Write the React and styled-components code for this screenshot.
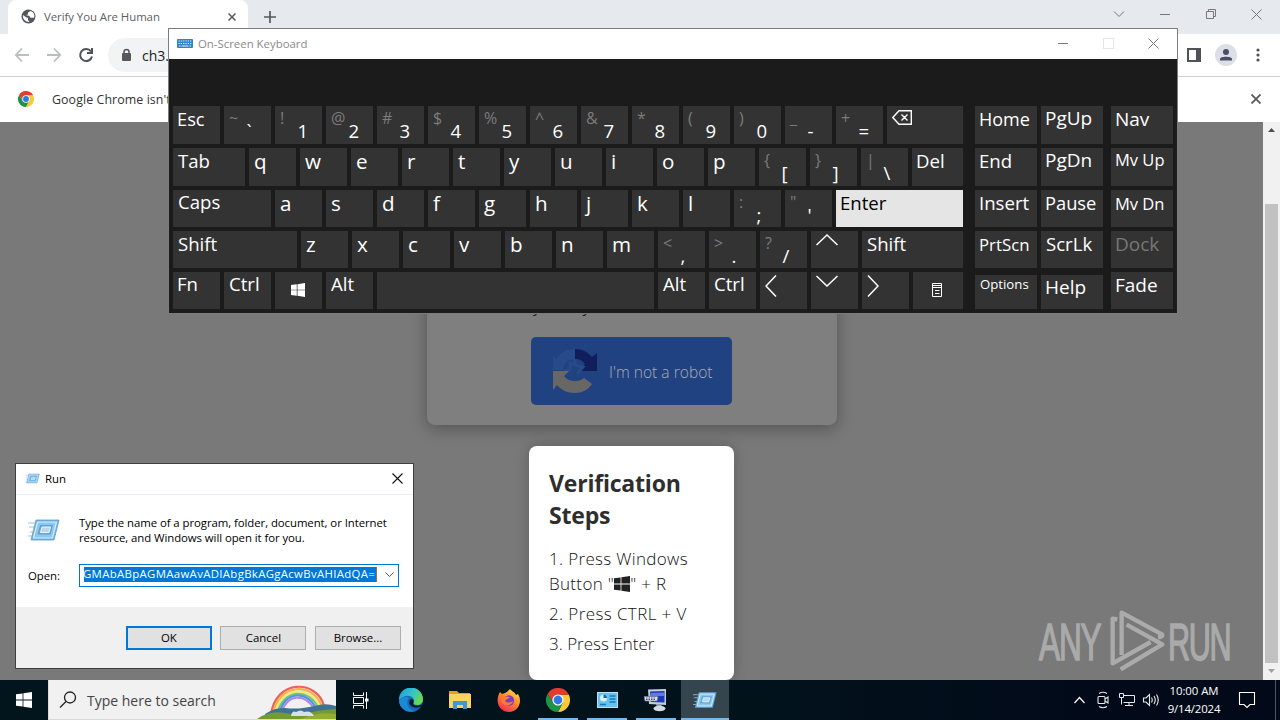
import React from "react";
import styled, { createGlobalStyle, css } from "styled-components";

const GlobalStyle = createGlobalStyle`
  * {
    box-sizing: border-box;
  }
  body {
    margin: 0;
    overflow: hidden;
    font-family: "Open Sans", "Noto Sans", sans-serif;
  }
  svg {
    display: block;
    flex: none;
  }
`

const Desktop = styled.div`
  position: relative;
  display: flex;
  flex-direction: column;
  width: 1280px;
  height: 720px;
  overflow: hidden;
  background: #797979;
`

const Label = styled.span`
  font-size: ${(props) => props.$size || 12}px;
  letter-spacing: ${(props) => props.$track || 0}px;
  font-weight: ${(props) => props.$weight || 400};
  color: ${(props) => props.$color || "#000"};
  white-space: nowrap;
`

/* ---------- browser ---------- */

const TabStrip = styled.div`
  display: flex;
  height: 34px;
  padding-left: 8px;
  background: #e6e9ed;
`

const Tab = styled.div`
  display: flex;
  align-items: center;
  width: 240px;
  height: 34px;
  padding: 0 12px 1px 13px;
  border-radius: 8px 8px 0 0;
  background: #fff;

  span {
    flex: 1;
    margin-left: 8px;
  }
`

const NewTab = styled.div`
  display: flex;
  align-items: center;
  margin-left: 15px;
`

const WindowButtons = styled.div`
  display: flex;
  align-items: center;
  gap: 34px;
  height: 28px;
  margin-left: auto;
  padding-right: ${(props) => props.$right}px;
`

const Toolbar = styled.div`
  display: flex;
  align-items: center;
  height: 43px;
  padding: 0 14px;
  background: #fff;
  border-bottom: 1px solid #d0d3d6;
`

const NavIcons = styled.div`
  display: flex;
  gap: 16px;
`

const Omnibox = styled.div`
  display: flex;
  align-items: center;
  flex: 1;
  gap: 9px;
  height: 34px;
  margin: 0 57px 0 14px;
  padding-left: 11px;
  border-radius: 17px;
  background: #f1f3f4;
`

const ToolbarIcons = styled.div`
  display: flex;
  align-items: center;
  gap: 13.5px;
`

const InfoBar = styled.div`
  display: flex;
  align-items: center;
  justify-content: space-between;
  height: 45px;
  padding: 0 19px 1px 18px;
  background: #fff;

  div {
    display: flex;
    align-items: center;
    gap: 18px;
  }
`

const PageArea = styled.div`
  display: flex;
  flex: 1;
  min-height: 0;
`

const PageContent = styled.div`
  display: flex;
  flex-direction: column;
  align-items: center;
  flex: 1;
  overflow: hidden;
  background: #797979;
`

const CaptchaCard = styled.div`
  display: flex;
  flex-direction: column;
  align-items: center;
  justify-content: flex-end;
  flex: none;
  width: 410px;
  height: 303px;
  padding-bottom: 20px;
  border-radius: 0 0 8px 8px;
  background: #7f7f7f;
  box-shadow: 0 4px 16px rgba(0, 0, 0, 0.3);
`

const CardText = styled.p`
  width: 205px;
  margin: 0 0 20px;
  padding-left: 4px;
  font-size: 15px;
  line-height: 22px;
  color: #1c1c1c;
  word-spacing: 38px;
`

const RobotButton = styled.div`
  display: flex;
  align-items: center;
  gap: 11px;
  width: 201px;
  height: 68px;
  padding-left: 21px;
  border-radius: 5px;
  background: #204280;

  span {
    margin-top: 2px;
  }
`

const StepsModal = styled.div`
  width: 205px;
  height: 234px;
  margin-top: 21px;
  padding: 21px 19px 21px 20px;
  border-radius: 8px;
  background: #fff;
  box-shadow: 0 0 14px rgba(0, 0, 0, 0.22);
`

const StepsTitle = styled.h2`
  margin: 0 0 15px;
  font-size: 23px;
  line-height: 32px;
  letter-spacing: -0.2px;
  font-weight: 700;
  color: #2e2e2e;
`

const Step = styled.p`
  margin: 0 0 5px;
  font-size: 17px;
  line-height: 25px;
  letter-spacing: ${(props) => props.$track || 0}px;
  font-weight: 300;
  color: #111;
  white-space: nowrap;

  svg {
    display: inline-block;
    vertical-align: -2px;
  }
`

const Scrollbar = styled.div`
  display: flex;
  flex-direction: column;
  align-items: center;
  justify-content: space-between;
  width: 17px;
  padding: 6px 0 7px;
  background: #f1f1f1;
`

const Thumb = styled.div`
  width: 13px;
  height: 459px;
  margin-top: 65px;
  background: #c1c1c1;
`

const Watermark = styled.div`
  position: absolute;
  left: 1036px;
  top: 606px;
`

/* ---------- on-screen keyboard ---------- */

const KeyboardWindow = styled.div`
  position: absolute;
  left: 168px;
  top: 28px;
  width: 1010px;
  height: 286px;
  border: 1px solid #7d7d7d;
  background: #1b1b1b;
`

const TitleBar = styled.div`
  display: flex;
  align-items: center;
  height: 30px;
  padding: 0 0 2px 8px;
  background: #fff;
  gap: 5px;
`

const Keys = styled.div`
  display: flex;
  padding: 47px 4px 0;
`

const KeyBlock = styled.div`
  display: flex;
  flex-direction: column;
  gap: 4px;
  margin-right: ${(props) => props.$gap || 0}px;
`

const KeyRow = styled.div`
  display: flex;
  gap: 4px;
  height: ${(props) => props.$height}px;
`

const Key = styled.div`
  display: flex;
  width: ${(props) => props.$width || 47}px;
  height: 100%;
  padding: ${(props) => props.$top ?? 1}px 0 0 ${(props) => props.$left ?? 5}px;
  line-height: ${(props) => props.$line || 24}px;
  font-size: ${(props) => props.$size || 18.6}px;
  color: ${(props) => props.$color || "#fff"};
  background: #333;
  white-space: nowrap;

  ${(props) => props.$pressed && css`
    background: #e5e5e5;
    color: #000;
  `}

  ${(props) => props.$center && css`
    align-items: center;
    justify-content: center;
    padding: 0 2px 2px 0;
  `}

  ${(props) => props.$short && css`
    height: 34px;
    margin-top: 3px;
  `}
`

const ShiftSymbol = styled.span`
  width: 17.5px;
  font-size: 16px;
  color: #7c7c7c;
  margin-top: -1px;
`

const BaseSymbol = styled.span`
  margin-top: 12px;
`

/* ---------- run dialog ---------- */

const RunWindow = styled.div`
  position: absolute;
  left: 15px;
  top: 463px;
  width: 399px;
  height: 206px;
  border: 1px solid #3f3f3f;
  background: #fff;
`

const RunTitle = styled.div`
  display: flex;
  align-items: center;
  gap: 5px;
  height: 31px;
  padding: 0 10px 2px 9px;
  border-bottom: 1px solid #ebf0f4;

  span {
    flex: 1;
  }
`

const RunBody = styled.div`
  display: grid;
  grid-template-columns: 51px 320px;
  align-items: center;
  grid-template-rows: 32px 24px;
  row-gap: 17px;
  height: 112px;
  padding: 19px 0 0 12px;
`

const RunText = styled.p`
  margin: 0;
  font-size: 11.4px;
  line-height: 15px;
  letter-spacing: -0.07px;
  white-space: nowrap;
`

const ComboBox = styled.div`
  display: flex;
  align-items: center;
  justify-content: space-between;
  height: 23px;
  padding: 0 4px;
  border: 1px solid #0078d7;
`

const Selection = styled.span`
  height: 15px;
  width: 293px;
  margin-bottom: 1px;
  overflow: hidden;
  border-right: 1px solid #b06a28;
  background: #0078d7;
  color: #fff;
  font-size: 11.4px;
  line-height: 14px;
  letter-spacing: 0.33px;
  text-indent: -1px;
  white-space: nowrap;
`

const RunFooter = styled.div`
  display: flex;
  justify-content: flex-end;
  gap: 8.6px;
  height: 61px;
  padding: 19px 12px 0 0;
  background: #f0f0f0;
`

const DialogButton = styled.div`
  width: 86px;
  height: 24px;
  border: ${(props) => (props.$primary ? "2px solid #0078d7" : "1px solid #adadad")};
  background: #e1e1e1;
  font-size: 11.4px;
  line-height: ${(props) => (props.$primary ? 20 : 22)}px;
  text-align: center;
`

/* ---------- taskbar ---------- */

const Taskbar = styled.div`
  position: relative;
  display: flex;
  flex: none;
  height: 40px;
  background: linear-gradient(90deg, #02151c, #02121b 60%, #020a1a 85%);
`

const StartButton = styled.div`
  display: flex;
  align-items: center;
  justify-content: center;
  width: 48px;
`

const SearchBox = styled.div`
  display: flex;
  align-items: center;
  width: 288px;
  padding-left: 10px;
  border: 1px solid #d9dadb;
  border-width: 0 0 1px 1px;
  background: #f1f1f1;

  span {
    flex: 1;
    margin: 2px 0 0 10px;
  }
`

const TaskItem = styled.div`
  display: flex;
  align-items: center;
  justify-content: center;
  width: 48px;
  margin-right: ${(props) => (props.$first ? 3 : 1)}px;
  background: ${(props) => (props.$active ? "#35454e" : "transparent")};
  box-shadow: ${(props) => (props.$active ? "inset 0 -2px #76b9ed" : "none")};

  ${(props) => props.$open && css`
    width: 40px;
    margin: 0 5px 0 4px;
    border-bottom: 2px solid #76b9ed;
    padding-top: 2px;
  `}
`

const Tray = styled.div`
  display: flex;
  align-items: center;
  margin-left: auto;
  gap: 6px;
`

const Clock = styled.div`
  display: flex;
  flex-direction: column;
  align-items: center;
  width: 60px;
  margin: 0 0 0 -2px;
  line-height: 18px;
`

const ShowDesktop = styled.div`
  width: 5px;
  height: 40px;
  margin-left: 9px;
  border-left: 1px solid #4d5563;
`

/* ---------- drawings ---------- */

const Cross = ({ size = 10, color = "#777", width = 1 }) => (
  <svg width={size} height={size} viewBox={`0 0 ${size} ${size}`}>
    <path d={`M.5 .5L${size - 0.5} ${size - 0.5}M${size - 0.5} .5L.5 ${size - 0.5}`} stroke={color} strokeWidth={width} />
  </svg>
)

const Minimize = () => (
  <svg width="12" height="12"><path d="M1 6.5H11" stroke="#777" /></svg>
)

const WindowsLogo = ({ size, color = "#fff" }) => (
  <svg width={size} height={size} viewBox="0 0 16 16" fill={color}>
    <path d="M0 2.3L6.6 1.4V7.6H0zM7.4 1.3L16 0V7.6H7.4zM0 8.4H6.6V14.6L0 13.7zM7.4 8.4H16V16L7.4 14.7z" />
  </svg>
)

const ChromeLogo = ({ size }) => (
  <svg width={size} height={size} viewBox="0 0 24 24">
    <path d="M12 6.5H22.7A12 12 0 0 1 12 24L16.8 14.7z" fill="#fcc934" />
    <path d="M1.6 6A12 12 0 0 1 22.7 6.5H12L7.2 14.7z" fill="#e33b2e" />
    <path d="M1.6 6L7.2 14.7L16.8 14.7L12 24A12 12 0 0 1 1.6 6z" fill="#1e9347" />
    <circle cx="12" cy="12" r="5.6" fill="#fff" />
    <circle cx="12" cy="12" r="4.4" fill="#2f78e8" />
  </svg>
)

const RunIcon = ({ width, height }) => (
  <svg width={width} height={height} viewBox="0 0 32 24">
    <path d="M0 5H10M1 9H8M0 18H6M2 14H7" stroke="#9cc3e4" strokeWidth="1" />
    <path d="M8 2H31L26 22H3z" fill="#6fb2df" stroke="#5f9dcf" strokeWidth=".8" />
    <path d="M9.5 4H28.5L24.5 20H5.5z" fill="#8cc8ee" stroke="#d8effc" strokeWidth="1.2" />
    <path d="M12 7H25L22.5 16.5H9.5z" fill="#5ba5d8" />
    <path d="M14 9H22.5L21 14.5H12.5z" fill="#b4d8f0" stroke="#eef8fe" />
  </svg>
)

const KeyArrow = ({ d, width, height, top = 2 }) => (
  <svg width={width} height={height + top} viewBox={`0 ${-top} ${width} ${height + top}`}>
    <path d={d} fill="none" stroke="#fff" strokeWidth="1.5" />
  </svg>
)

const GlobeIcon = () => (
  <svg width="15" height="15" viewBox="0 0 15 15">
    <circle cx="7.5" cy="7.5" r="7" fill="#54585c" />
    <path d="M2 6L5 8.2L7 9V11L8.5 13A6 6 0 0 1 2 6zM9.5 2L7 3.5V5.2L5.2 6.3L8.2 6.8L9.5 8.8H13.2A6 6 0 0 0 9.5 2z" fill="#fff" />
  </svg>
)

const KeyboardIcon = () => (
  <svg width="16" height="9" viewBox="0 0 16 9">
    <rect width="16" height="9" rx="1" fill="#2f83c8" />
    <path d="M1.5 2H15M1.5 4.5H15" stroke="#e3f1fb" strokeDasharray="1.3 1" />
    <path d="M2 7H3.5M4.5 7H11.5M12.5 7H14" stroke="#e3f1fb" />
  </svg>
)

const RecaptchaIcon = () => (
  <svg width="46" height="46" viewBox="0 0 46 46">
    <path d="M23 1C30 1 36 4 40 9L45 5V23H27L33 16C30 12 27 11 23 11z" fill="#101e5c" />
    <path d="M23 1C14 1 8 5 4 11L1 7V22H11C11 15 16 11 23 11z" fill="#28498a" />
    <path d="M23 11V17L18 15V22L12 23M23 17L31 19L25 26" fill="none" stroke="#28498a" strokeWidth="3" />
    <path d="M1 23H17L12 28C15 32 19 33 23 33C27 33 30 32 32 30L40 36C36 42 30 45 23 45C15 45 9 42 5 37L1 42z" fill="#696765" />
  </svg>
)

const AnyRunLogo = () => (
  <svg width="200" height="70" viewBox="0 0 200 70">
    <g fill="#aaa" stroke="#aaa" strokeWidth="1.5" fontFamily="Liberation Sans" fontSize="51">
      <text transform="translate(3 54) scale(.62 1)" textLength="101">ANY</text>
      <text transform="translate(132 54) scale(.6 1)" textLength="106">RUN</text>
    </g>
    <g transform="translate(-6 -6) scale(.3333)" fill="none" stroke="#ababab" strokeWidth="13" strokeLinejoin="round">
      <path d="M275 165V38L396 103Q400 110 384 112" />
      <path d="M290 74L397 133L272 208" />
      <path d="M262 58L248 56V190L362 126" />
    </g>
  </svg>
)

const EdgeLogo = () => (
  <svg width="24" height="24" viewBox="0 0 24 24">
    <defs>
      <linearGradient id="edgeTop" x1="0" y1="0" x2="1" y2=".5">
        <stop offset="0" stopColor="#1e9be0" />
        <stop offset=".6" stopColor="#35c6c6" />
        <stop offset="1" stopColor="#66d94f" />
      </linearGradient>
    </defs>
    <circle cx="12" cy="12" r="12" fill="#1669b8" />
    <path d="M0 12A12 12 0 0 1 24 11C24 15 21 17 18 17C15 17 14 16 15 14C16 9 9 6 4 9C2 10 1 11 0 12z" fill="url(#edgeTop)" />
    <path d="M10 10C6 14 9 22 16 23C10 25 1 22 0 13C3 8 8 8 10 10z" fill="#1b8ad3" />
    <path d="M14.5 14C13 17 17 19 24 16L23 18C20 20 17 20 14 19C10 18 9 13 12 11C14 11 15 12 14.5 14z" fill="#04202e" />
  </svg>
)

const ExplorerIcon = () => (
  <svg width="22" height="20" viewBox="0 0 22 20">
    <path d="M0 1H8L10 3H21V7H0z" fill="#e0a021" />
    <path d="M0 4H22V18H0z" fill="#fbd362" />
    <path d="M4 11H18V19H14V15H8V19H4z" fill="#3e97cf" />
  </svg>
)

const FirefoxIcon = () => (
  <svg width="24" height="24" viewBox="0 0 24 24">
    <defs>
      <linearGradient id="fox" x1=".8" y1="0" x2=".2" y2="1">
        <stop offset="0" stopColor="#ffe14a" />
        <stop offset=".45" stopColor="#ff8a2a" />
        <stop offset="1" stopColor="#f1225f" />
      </linearGradient>
    </defs>
    <path d="M3 4L5 6L8 5C10 4 11 3 13 1C14 3 18 4 19 7L21 6C26 14 21 24 12 24C3 24-3 14 3 4z" fill="url(#fox)" />
    <circle cx="12" cy="12.5" r="5.2" fill="#7b3cc6" />
    <path d="M4 8C8 7 9 9 13 9C12 11 9 11 8 13C10 15 13 15 16 13C15 18 7 19 5 14z" fill="#ff7b2e" />
  </svg>
)

const PanelIcon = () => (
  <svg width="21" height="16" viewBox="0 0 21 16">
    <rect x=".5" y=".5" width="20" height="15" fill="#66c1ef" stroke="#b7e3f8" />
    <circle cx="6.5" cy="6" r="3.5" fill="#d9f1fc" />
    <path d="M6.5 6V2.5A3.5 3.5 0 0 1 10 6z" fill="#1d699f" />
    <path d="M12.5 4H18.5M12.5 7H18.5M12.5 10H18.5M3 12.5H9" stroke="#1878bd" strokeWidth="1.5" />
  </svg>
)

const RemoteIcon = () => (
  <svg width="24" height="24" viewBox="0 0 24 24">
    <path d="M4 1.5L22 1L22 17L5 16z" fill="#c3ccdb" />
    <path d="M6 3.5L20.5 3L20.5 14.5L7 14z" fill="#1d37b5" />
    <path d="M7 5L20 4.500L20 8L7 8z" fill="#5f7bdc" />
    <path d="M0 8.500H14L13 13H1z" fill="#dfe4ed" stroke="#6a7790" strokeWidth=".7" />
    <path d="M2 10H12M2 11.500H11" stroke="#3d4c69" strokeDasharray="1.5 1" />
    <path d="M12 16L18 16.500L17 20H13z" fill="#9ba6b8" />
    <ellipse cx="15.5" cy="20.5" rx="6" ry="2.8" fill="#d4d9df" />
  </svg>
)

const RainbowArt = () => (
  <svg width="79" height="38" viewBox="0 -2 79 38">
    <g fill="none" strokeWidth="2.2">
      <path d="M14 32C18 -4 60 -4 67 23" stroke="#f0615a" />
      <path d="M16 32C21 -1 57 -1 65 24" stroke="#f8b04b" />
      <path d="M18 32C23 2 55 2 63 25" stroke="#f5ea71" />
      <path d="M20 32C25 5 53 5 61 25" stroke="#67c982" />
      <path d="M22 32C27 7 51 7 59 26" stroke="#5c8ee8" />
      <path d="M24 32C29 10 49 10 57 26" stroke="#a98ae8" />
    </g>
    <path d="M8 31Q18 24 28 25T46 25T62 22T79 23V36H8z" fill="#3f7190" />
    <path d="M0 36Q12 27 28 30T52 30T79 26V36z" fill="#729b31" />
    <path d="M44 36Q62 28 79 31V36z" fill="#94ad35" />
    <path d="M34 33Q35 27 39 29Q44 26 47 29Q54 27 57 33z" fill="#d9dfe9" />
  </svg>
)

/* ---------- key data ---------- */

const letters = (text) => text.split("").map((c) => ({ label: c, size: 20.6 }))
const pair = (shift, base) => ({ shift, base })

const upArrow = <KeyArrow d="M.5 11L11 1L21.500 11" width={22} height={12} />
const downArrow = <KeyArrow d="M.5 1L11 11L21.500 1" width={22} height={12} />
const leftArrow = <KeyArrow d="M11 .5L1 11L11 21.500" width={12} height={22} />
const rightArrow = <KeyArrow d="M1 .5L11 11L1 21.500" width={12} height={22} />

const backspace = (
  <svg width="22" height="22" viewBox="0 0 22 22" fill="none" stroke="#fff" strokeWidth="1.4">
    <path d="M7 3.700H19.300V17.300H7L.8 10.500zM9.500 7.500L15.500 13.500M15.500 7.500L9.500 13.500" />
  </svg>
)

const menuGlyph = (
  <svg width="10" height="14" viewBox="0 0 10 14" fill="none" stroke="#fff">
    <path d="M.5 .5H9.500V13.500H.5zM.5 2.500H9.500M.5 4.500H9.500M3 7.500H7.500M3 10.500H7.500" />
  </svg>
)

const mainRows = [
  { height: 38, keys: [
    { label: "Esc", size: 18.3, left: 4 },
    pair("~", "`"), pair("!", "1"), pair("@", "2"), pair("#", "3"), pair("$", "4"), pair("%", "5"),
    pair("^", "6"), pair("&", "7"), pair("*", "8"), pair("(", "9"), pair(")", "0"), pair("_", "-"), pair("+", "="),
    { icon: backspace, width: 76 },
  ] },
  { height: 38, keys: [
    { label: "Tab", width: 72 },
    ...letters("qwertyuiop"),
    pair("{", "["), pair("}", "]"), pair("|", "\\"),
    { label: "Del", width: 51, left: 4 },
  ] },
  { height: 37, keys: [
    { label: "Caps", width: 98, top: 0 },
    ...letters("asdfghjkl"),
    pair(":", ";"), pair("\"", "'"),
    { label: "Enter", width: 127, pressed: true, left: 4 },
  ] },
  { height: 37, keys: [
    { label: "Shift", width: 124 },
    ...letters("zxcvbnm"),
    pair("<", ","), pair(">", "."), pair("?", "/"),
    { icon: upArrow },
    { label: "Shift", width: 101 },
  ] },
  { height: 37, keys: [
    { label: "Fn", left: 4, top: 0 },
    { label: "Ctrl", top: 0 },
    { icon: <WindowsLogo size={14} />, center: true },
    { label: "Alt", top: 0 },
    { label: "", width: 277 },
    { label: "Alt", top: 0 },
    { label: "Ctrl", top: 0 },
    { icon: leftArrow },
    { icon: downArrow },
    { icon: rightArrow },
    { icon: menuGlyph, width: 50, center: true },
  ] },
]

const side = (label, rest) => ({ label, width: 62, left: 4, ...rest })

const navRows = [
  { height: 38, keys: [side("Home", { size: 18 }), side("PgUp", { top: 0, size: 19 })] },
  { height: 38, keys: [side("End"), side("PgDn", { top: 0, size: 19 })] },
  { height: 37, keys: [side("Insert"), side("Pause", { size: 18.3 })] },
  { height: 37, keys: [side("PrtScn", { size: 16.8, top: 2 }), side("ScrLk", { left: 5 })] },
  { height: 37, keys: [side("Options", { size: 13.2, short: true, top: 0, line: 19, left: 5 }), side("Help", { size: 19, short: true, top: 0 })] },
]

const sideRows = [
  { height: 38, keys: [side("Nav", { size: 19 })] },
  { height: 38, keys: [side("Mv Up", { size: 16.5, top: 0 })] },
  { height: 37, keys: [side("Mv Dn", { size: 16.5, top: 2 })] },
  { height: 37, keys: [side("Dock", { size: 19, color: "#777" })] },
  { height: 37, keys: [side("Fade", { size: 19 })] },
]

const Rows = ({ rows, gap }) => (
  <KeyBlock $gap={gap}>
    {rows.map((row, r) => (
      <KeyRow key={r} $height={row.height}>
        {row.keys.map((k, i) => (
          <Key
            key={i}
            $width={k.width}
            $size={k.size}
            $top={k.top}
            $left={k.left}
            $line={k.line}
            $color={k.color}
            $pressed={k.pressed}
            $center={k.center}
            $short={k.short}
          >
            {k.shift && <ShiftSymbol>{k.shift}</ShiftSymbol>}
            {k.base && <BaseSymbol>{k.base}</BaseSymbol>}
            {k.label}
            {k.icon}
          </Key>
        ))}
      </KeyRow>
    ))}
  </KeyBlock>
)

const OnScreenKeyboard = () => (
  <KeyboardWindow>
    <TitleBar>
      <KeyboardIcon />
      <Label $size={11.4} $color="#8a8a8a">On-Screen Keyboard</Label>
      <WindowButtons $right={18}>
        <Minimize />
        <svg width="11" height="11"><rect x=".5" y=".5" width="10" height="10" fill="none" stroke="#e6e6e6" /></svg>
        <Cross size={11} />
      </WindowButtons>
    </TitleBar>
    <Keys>
      <Rows rows={mainRows} gap={12} />
      <Rows rows={navRows} gap={8} />
      <Rows rows={sideRows} />
    </Keys>
  </KeyboardWindow>
)

const Browser = () => (
  <>
    <TabStrip>
      <Tab>
        <GlobeIcon />
        <Label $size={11.4} $track={-0.05} $color="#5c5f63">Verify You Are Human</Label>
        <Cross size={8} color="#55595d" width={1.5} />
      </Tab>
      <NewTab>
        <svg width="14" height="14"><path d="M7 1V13M1 7H13" stroke="#55595d" strokeWidth="1.7" /></svg>
      </NewTab>
      <WindowButtons $right={18}>
        <svg width="12" height="12"><path d="M1 3.500L6 8.500L11 3.500" fill="none" stroke="#777" /></svg>
        <Minimize />
        <svg width="12" height="12" fill="none" stroke="#777"><path d="M1.500 3.500H8.500V10.500H1.500zM3.500 3.500V1.500H10.500V8.500H8.500" /></svg>
        <Cross size={11} />
      </WindowButtons>
    </TabStrip>
    <Toolbar>
      <NavIcons>
        <svg width="16" height="16" fill="none" stroke="#bbbdbf" strokeWidth="1.8"><path d="M15 8H2M8 1.500L1.800 8L8 14.500" /></svg>
        <svg width="16" height="16" fill="none" stroke="#bbbdbf" strokeWidth="1.8"><path d="M1 8H14M8 1.500L14.200 8L8 14.500" /></svg>
        <svg width="16" height="16" fill="none" stroke="#4f5357" strokeWidth="2"><path d="M13 4.500A6 6 0 1 0 14 9.500M14 1V6H9" /></svg>
      </NavIcons>
      <Omnibox>
        <svg width="14" height="14">
          <rect x="3" y="5" width="9" height="8" rx="1" fill="#55595d" />
          <path d="M5 6V4A2.500 2.500 0 0 1 10 4V6" fill="none" stroke="#55595d" strokeWidth="1.500" />
        </svg>
        <Label $size={14} $color="#202124">ch3.</Label>
      </Omnibox>
      <ToolbarIcons>
        <svg width="14" height="14"><path d="M1 1H13V13H1z" fill="#fff" stroke="#4f5357" strokeWidth="2" /><path d="M9 1H13V13H9z" fill="#4f5357" /></svg>
        <svg width="22" height="22">
          <circle cx="11" cy="11" r="11" fill="#dcdfe8" />
          <circle cx="11" cy="8" r="3" fill="#4a4f66" />
          <path d="M5 16.500V15C5 12 17 12 17 15V16.500z" fill="#4a4f66" />
        </svg>
        <svg width="16" height="14" fill="#4f5357"><circle cx="8" cy="2" r="1.600" /><circle cx="8" cy="7" r="1.600" /><circle cx="8" cy="12" r="1.600" /></svg>
      </ToolbarIcons>
    </Toolbar>
    <InfoBar>
      <div>
        <ChromeLogo size={16} />
        <Label $size={12.4} $track={0.08} $color="#333">Google Chrome isn't your default browser</Label>
      </div>
      <Cross size={10} color="#55595d" width={1.8} />
    </InfoBar>
    <PageArea>
      <PageContent>
        <CaptchaCard>
          <CardText>y y</CardText>
          <RobotButton>
            <RecaptchaIcon />
            <Label $size={15.600} $weight={300} $color="#a9adb5">I'm not a robot</Label>
          </RobotButton>
        </CaptchaCard>
        <StepsModal>
          <StepsTitle>Verification<br />Steps</StepsTitle>
          <Step $track={0.33}>1. Press Windows<br />Button "<WindowsLogo size={16} color="#222" />" + R</Step>
          <Step $track={0.4}>2. Press CTRL + V</Step>
          <Step>3. Press Enter</Step>
        </StepsModal>
      </PageContent>
      <Scrollbar>
        <svg width="7" height="4"><path d="M0 4L3.500 0L7 4z" fill="#505050" /></svg>
        <Thumb />
        <svg width="7" height="4"><path d="M0 0L3.500 4L7 0z" fill="#a0a0a0" /></svg>
      </Scrollbar>
    </PageArea>
  </>
)

const RunDialog = () => (
  <RunWindow>
    <RunTitle>
      <RunIcon width={15} height={11} />
      <Label $size={11.4}>Run</Label>
      <Cross size={11} color="#111" width={1.1} />
    </RunTitle>
    <RunBody>
      <RunIcon width={32} height={24} />
      <RunText>Type the name of a program, folder, document, or Internet<br />resource, and Windows will open it for you.</RunText>
      <RunText>Open:</RunText>
      <ComboBox>
        <Selection>GMAbABpAGMAawAvADIAbgBkAGgAcwBvAHIAdQA=</Selection>
        <svg width="9" height="6"><path d="M.5 .5L4.500 4.500L8.500 .5" fill="none" stroke="#555" /></svg>
      </ComboBox>
    </RunBody>
    <RunFooter>
      <DialogButton $primary>OK</DialogButton>
      <DialogButton>Cancel</DialogButton>
      <DialogButton>Browse...</DialogButton>
    </RunFooter>
  </RunWindow>
)

const TaskbarView = () => (
  <Taskbar>
    <StartButton><WindowsLogo size={16} /></StartButton>
    <SearchBox>
      <svg width="18" height="18" fill="none" stroke="#222" strokeWidth="1.300"><circle cx="11" cy="6.500" r="5.500" /><path d="M7 10.500L1 16.500" /></svg>
      <Label $size={14} $color="#444">Type here to search</Label>
      <RainbowArt />
    </SearchBox>
    <TaskItem $first>
      <svg width="17" height="17" fill="none" stroke="#fff">
        <path d="M1.500 .5V3.500H11.500V.5M1.500 16.500V13.500H11.500V16.500M1.500 5.500H11.500V11.500H1.500zM14.500 0V17" />
        <path d="M13 6.500H16.500V9.500H13z" fill="#fff" stroke="none" />
      </svg>
    </TaskItem>
    <TaskItem><EdgeLogo /></TaskItem>
    <TaskItem><ExplorerIcon /></TaskItem>
    <TaskItem><FirefoxIcon /></TaskItem>
    <TaskItem $open><ChromeLogo size={24} /></TaskItem>
    <TaskItem $open><PanelIcon /></TaskItem>
    <TaskItem $open><RemoteIcon /></TaskItem>
    <TaskItem $active><RunIcon width={24} height={18} /></TaskItem>
    <Tray>
      <svg width="14" height="8"><path d="M.5 7L5.500 1.500L10.500 7" fill="none" stroke="#fff" strokeWidth="1.200" /></svg>
      <svg width="18" height="18" fill="none" stroke="#e8e8e8" strokeWidth="1.100">
        <rect x="4" y="5.500" width="7" height="7" rx="1" />
        <path d="M11 8L14 6V12L11 10M5 2.500Q9 0 13 2.500M5 15.500Q9 18 13 15.500" />
      </svg>
      <svg width="18" height="16" fill="none" stroke="#e8e8e8">
        <path d="M5.500 3.500H16.500V10.500H5.500M11 10.500V13.500M7 13.500H15M1.500 1.500H5.500V5.500H1.500zM3.500 5.500V12.500" />
      </svg>
      <svg width="18" height="14" fill="none" stroke="#e8e8e8" strokeWidth="1.100">
        <path d="M1.500 5V9H4L7.500 12.500V1.500L4 5zM9.500 4.500Q11 7 9.500 9.500M12 3Q14.500 7 12 11M14.500 1.500Q18 7 14.500 12.500" />
      </svg>
      <Clock>
        <Label $size={11.400} $track={-0.05} $color="#fff">10:00 AM</Label>
        <Label $size={11.400} $track={-0.15} $color="#fff">9/14/2024</Label>
      </Clock>
      <svg width="30" height="18" fill="none" stroke="#fff" strokeWidth="1.100"><path d="M9.500 1.500H24.500V13.500H20L17 16.500L14 13.500H9.500z" /></svg>
      <ShowDesktop />
    </Tray>
  </Taskbar>
)

export default function App() {
  return (
    <Desktop>
      <GlobalStyle />
      <Browser />
      <TaskbarView />
      <Watermark><AnyRunLogo /></Watermark>
      <RunDialog />
      <OnScreenKeyboard />
    </Desktop>
  )
}
